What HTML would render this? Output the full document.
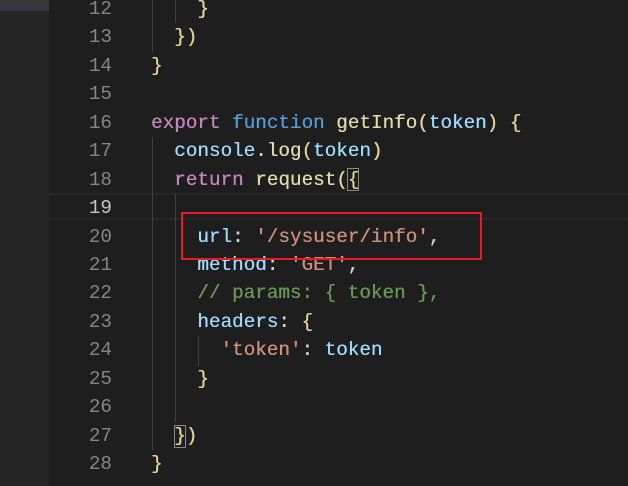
<!DOCTYPE html>
<html><head><style>
body{margin:0;width:628px;height:486px;overflow:hidden;background:#1e1e1e;position:relative;font-family:"Liberation Mono",monospace;font-size:19.3px}
.side{position:absolute;left:0;top:0;width:49px;height:486px;background:#252526}
.sel{position:absolute;left:0;top:0;width:49px;height:11px;background:#37373d}
.ln{position:absolute;left:60px;width:52px;text-align:right;color:#858585;height:28.44px;line-height:28.44px}
.cd{position:absolute;left:151px;white-space:pre;color:#d4d4d4;height:28.44px;line-height:28.44px;text-shadow:0.3px 0 0 currentColor}
.k{color:#c586c0}.b{color:#569cd6}.f{color:#dcdcaa}.v{color:#9cdcfe}.s{color:#ce9178}.c{color:#6a9955}.y{color:#e3d49c}
.g{position:absolute;width:1px;background:#404040}
.bm{position:absolute;border:1px solid #888;box-sizing:border-box;width:12px;height:23px}
</style></head><body>
<div class="side"></div><div class="sel"></div>
<div style="position:absolute;left:49px;top:193px;width:579px;height:27px;border-top:2px solid #282828;border-bottom:2px solid #282828;box-sizing:border-box"></div>
<div class="g" style="left:152px;top:0;height:52px"></div>
<div class="g" style="left:175px;top:0;height:23px"></div>
<div class="g" style="left:152px;top:137px;height:313px"></div>
<div class="g" style="left:175px;top:194px;height:228px"></div>
<div class="g" style="left:198px;top:336px;height:30px"></div>
<div class="bm" style="left:347px;top:168px"></div>
<div class="bm" style="left:174px;top:425px"></div>
<div class="ln" style="top:-5px">12</div><div class="cd" style="top:-5px">    <span class="y">}</span></div>
<div class="ln" style="top:23px">13</div><div class="cd" style="top:23px">  <span class="y">})</span></div>
<div class="ln" style="top:52px">14</div><div class="cd" style="top:52px"><span class="y">}</span></div>
<div class="ln" style="top:80px">15</div>
<div class="ln" style="top:109px">16</div><div class="cd" style="top:109px"><span class="k">export</span> <span class="b">function</span> <span class="f">getInfo</span><span class="y">(</span><span class="v">token</span><span class="y">)</span> <span class="y">{</span></div>
<div class="ln" style="top:137px">17</div><div class="cd" style="top:137px">  <span class="v">console</span>.<span class="f">log</span><span class="y">(</span><span class="v">token</span><span class="y">)</span></div>
<div class="ln" style="top:166px">18</div><div class="cd" style="top:166px">  <span class="k">return</span> <span class="f">request</span><span class="y">({</span></div>
<div class="ln" style="top:194px;color:#c6c6c6">19</div>
<div class="ln" style="top:223px">20</div><div class="cd" style="top:223px">    <span class="v">url</span>: <span class="s">'/sysuser/info'</span>,</div>
<div class="ln" style="top:251px">21</div><div class="cd" style="top:251px">    <span class="v">method</span>: <span class="s">'GET'</span>,</div>
<div class="ln" style="top:279px">22</div><div class="cd" style="top:279px">    <span class="c">// params: { token },</span></div>
<div class="ln" style="top:308px">23</div><div class="cd" style="top:308px">    <span class="v">headers</span>: <span class="y">{</span></div>
<div class="ln" style="top:336px">24</div><div class="cd" style="top:336px">      <span class="s">'token'</span>: <span class="v">token</span></div>
<div class="ln" style="top:365px">25</div><div class="cd" style="top:365px">    <span class="y">}</span></div>
<div class="ln" style="top:393px">26</div>
<div class="ln" style="top:422px">27</div><div class="cd" style="top:422px">  <span class="y">})</span></div>
<div class="ln" style="top:450px">28</div><div class="cd" style="top:450px"><span class="y">}</span></div>
<div style="position:absolute;left:181px;top:212px;width:301px;height:48px;border:2px solid #e81c23;box-sizing:border-box"></div>
</body></html>
